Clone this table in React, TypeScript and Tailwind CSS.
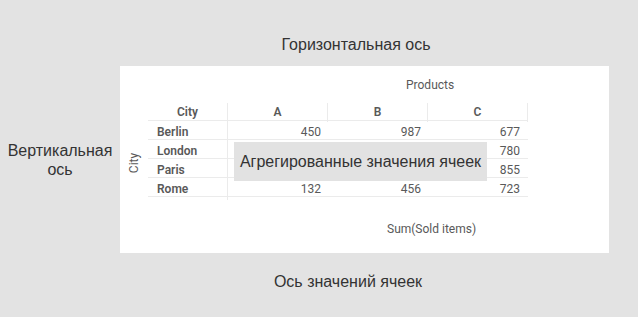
const rows = [
  { city: 'Berlin', a: '450', b: '987', c: '677' },
  { city: 'London', a: '', b: '', c: '780' },
  { city: 'Paris', a: '', b: '', c: '855' },
  { city: 'Rome', a: '132', b: '456', c: '723' },
];

const cols = ['A', 'B', 'C'];

export default function App() {
  return (
    <div className="w-[638px] h-[317px] bg-[#e3e3e3] flex flex-col font-['Liberation_Sans',Arial,sans-serif] text-[#333]">
      {/* Horizontal axis label */}
      <div className="h-[66px] flex justify-center pl-[74px] pt-[35px] text-[16px] leading-[20px]">
        Горизонтальная ось
      </div>

      <div className="flex">
        {/* Vertical axis label */}
        <div className="w-[120px] flex items-center justify-center text-center text-[16px] leading-[19px]">
          Вертикальная
          <br />
          ось
        </div>

        {/* Pivot panel */}
        <div className="relative w-[489px] h-[187px] bg-white font-['Roboto',sans-serif] text-[12px] text-[#595959]">
          <div className="pl-[286px] pt-[11px] h-[37px] leading-[16px]">Products</div>

          <div className="flex">
            <div className="w-[28px] flex items-center justify-center pt-[26px]">
              <span className="-rotate-90 leading-[14px]">City</span>
            </div>

            <div className="w-[380px]">
              <div className="grid grid-cols-[80px_100px_100px_100px] h-[18px] border-b border-[#ebebeb] font-semibold leading-[19px]">
                <div className="text-center border-r border-[#ebebeb]">City</div>
                {cols.map((c) => (
                  <div key={c} className="text-center border-r border-[#ebebeb]">
                    {c}
                  </div>
                ))}
              </div>
              {rows.map((r) => (
                <div
                  key={r.city}
                  className="grid grid-cols-[80px_100px_100px_100px] h-[19px] border-b border-[#ebebeb] leading-[22px]"
                >
                  <div className="pl-[9px] font-semibold border-r border-[#ebebeb]">{r.city}</div>
                  <div className="text-right pr-[7px]">{r.a}</div>
                  <div className="text-right pr-[7px]">{r.b}</div>
                  <div className="text-right pr-[8px]">{r.c}</div>
                </div>
              ))}
            </div>
          </div>

          <div className="pl-[267px] pt-[24px] leading-[16px]">Sum(Sold items)</div>

          {/* Aggregated values callout */}
          <div className="absolute left-[114px] top-[76px] w-[253px] h-[39px] bg-[#e2e2e2] flex items-center justify-center font-['Liberation_Sans',Arial,sans-serif] text-[16px] text-[#333]">
            Агрегированные значения ячеек
          </div>
        </div>
      </div>

      {/* Cell values axis label */}
      <div className="flex-1 flex justify-center pl-[58px] pt-[19px] text-[16px] leading-[20px]">
        Ось значений ячеек
      </div>
    </div>
  );
}
